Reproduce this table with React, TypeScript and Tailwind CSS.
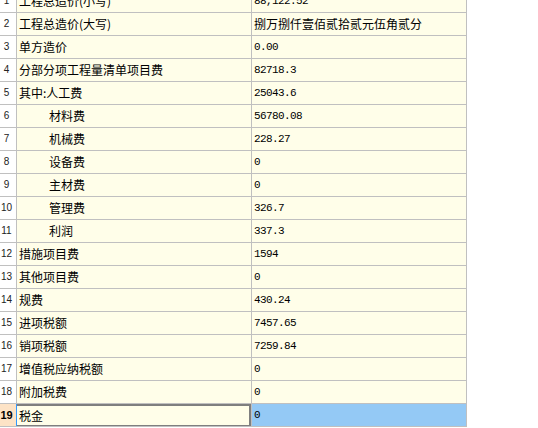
import React from "react";

type Row = { n: number; name: string; value: string; indent?: boolean };

const rows: Row[] = [
  { n: 1, name: "工程总造价(小写)", value: "88,122.52" },
  { n: 2, name: "工程总造价(大写)", value: "捌万捌仟壹佰贰拾贰元伍角贰分" },
  { n: 3, name: "单方造价", value: "0.00" },
  { n: 4, name: "分部分项工程量清单项目费", value: "82718.3" },
  { n: 5, name: "其中:人工费", value: "25043.6" },
  { n: 6, name: "材料费", value: "56780.08", indent: true },
  { n: 7, name: "机械费", value: "228.27", indent: true },
  { n: 8, name: "设备费", value: "0", indent: true },
  { n: 9, name: "主材费", value: "0", indent: true },
  { n: 10, name: "管理费", value: "326.7", indent: true },
  { n: 11, name: "利润", value: "337.3", indent: true },
  { n: 12, name: "措施项目费", value: "1594" },
  { n: 13, name: "其他项目费", value: "0" },
  { n: 14, name: "规费", value: "430.24" },
  { n: 15, name: "进项税额", value: "7457.65" },
  { n: 16, name: "销项税额", value: "7259.84" },
  { n: 17, name: "增值税应纳税额", value: "0" },
  { n: 18, name: "附加税费", value: "0" },
  { n: 19, name: "税金", value: "0" },
];

const cjk = "font-['SimSun','Noto_Sans_CJK_SC',sans-serif]";
const mono = "font-['Liberation_Mono','Noto_Sans_CJK_SC',monospace]";

function isAscii(s: string) {
  return /^[\x00-\x7f]*$/.test(s);
}

export default function App() {
  return (
    <div className="w-[538px] h-[428px] overflow-hidden bg-white">
      <div className="mt-[-10px] flex flex-col">
        {rows.map((r) => {
          const sel = r.n === 19;
          return (
            <div key={r.n} className="flex h-[23px] w-[467px] border-b border-[#c0c0c0]">
              <div
                className={`w-[16px] h-[22px] flex items-center justify-center pr-[3px] text-[10px] leading-none text-[#222] font-['Liberation_Sans',sans-serif] ${
                  sel ? "bg-[#fde3c6] font-bold text-[11px] text-black pr-[2px]" : "bg-white"
                }`}
              >
                {r.n}
              </div>
              <div className={`w-[1px] h-[22px] ${sel ? "bg-[#3399ff]" : "bg-[#c0c0c0]"}`} />
              <div
                className={`w-[234px] h-[22px] flex items-center bg-[#fffee9] text-[12px] leading-none text-black ${cjk} ${
                  sel ? "border-t-2 border-r-2 border-b-[1px] border-[#7f7f7f] pl-[2px]" : "pl-[2px]"
                } ${r.indent ? "pl-[32px]" : ""}`}
              >
                {r.name}
              </div>
              <div className="w-[1px] h-[22px] bg-[#c0c0c0]" />
              <div
                className={`w-[214px] h-[22px] flex items-center pl-[2px] text-black leading-none ${
                  sel ? "bg-[#94c9f5]" : "bg-[#fffee9]"
                } ${isAscii(r.value) ? `${mono} text-[11px] tracking-[-0.6px]` : `${cjk} text-[12px]`}`}
              >
                {r.value}
              </div>
              <div className="w-[1px] h-[22px] bg-[#c0c0c0]" />
            </div>
          );
        })}
      </div>
    </div>
  );
}
